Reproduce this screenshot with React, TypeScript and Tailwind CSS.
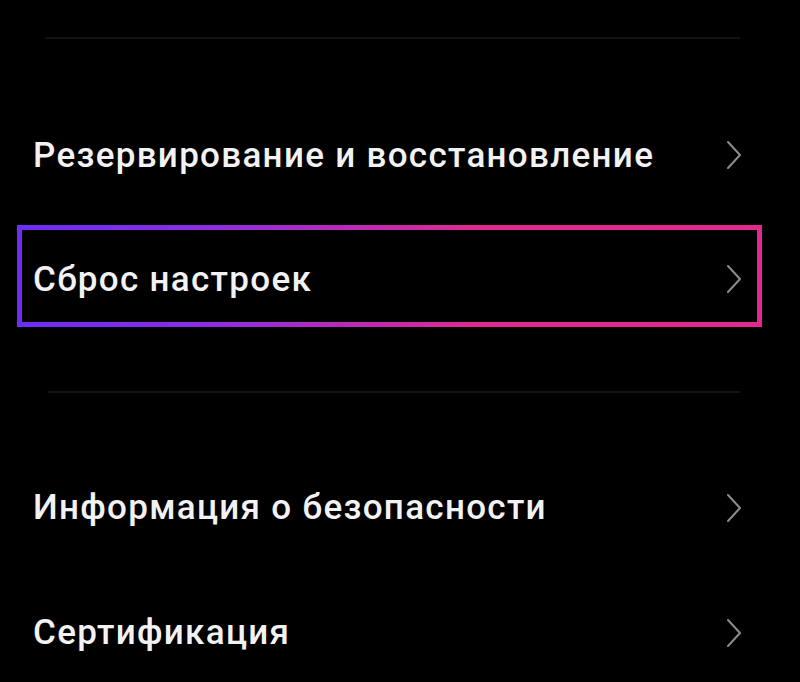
function Chevron() {
  return (
    <svg width="18" height="30" viewBox="0 0 18 30" fill="none" className="shrink-0">
      <polyline
        points="3,2 15,15 3,28"
        stroke="#8c8c8c"
        strokeWidth="2"
        strokeLinecap="round"
        strokeLinejoin="round"
      />
    </svg>
  );
}

function Row({ label, className = "" }: { label: string; className?: string }) {
  return (
    <div className={"flex items-center justify-between pl-[33px] pr-[57px] " + className}>
      <span className="text-[35px] font-medium leading-none tracking-[1.3px] text-[#f2f2f2]">
        {label}
      </span>
      <Chevron />
    </div>
  );
}

export default function App() {
  return (
    <div
      className="flex h-[682px] w-[800px] flex-col overflow-hidden bg-black"
      style={{ fontFamily: "Roboto, 'Noto Sans', sans-serif" }}
    >
      <div className="mt-[37px] ml-[45px] mr-[60px] h-[2px] shrink-0 bg-[#131313]" />

      <Row label="Резервирование и восстановление" className="mt-[53px] h-[126px] shrink-0" />

      <div className="mt-[7px] ml-[17px] mr-[38px] shrink-0 bg-[linear-gradient(90deg,#6c2df4_0%,#8a2de6_25%,#c22ab0_48%,#e1298f_62%,#e2298d_100%)] p-[5px]">
        <div className="flex h-[92px] items-center justify-between bg-black pt-[6px] pl-[11px] pr-[14px]">
          <span className="text-[35px] font-medium leading-none tracking-[1.3px] text-[#f2f2f2]">
            Сброс настроек
          </span>
          <Chevron />
        </div>
      </div>

      <div className="mt-[64px] ml-[48px] mr-[60px] h-[2px] shrink-0 bg-[#131313]" />

      <Row label="Информация о безопасности" className="mt-[52px] h-[125px] shrink-0" />
      <Row label="Сертификация" className="h-[125px] shrink-0" />
    </div>
  );
}
